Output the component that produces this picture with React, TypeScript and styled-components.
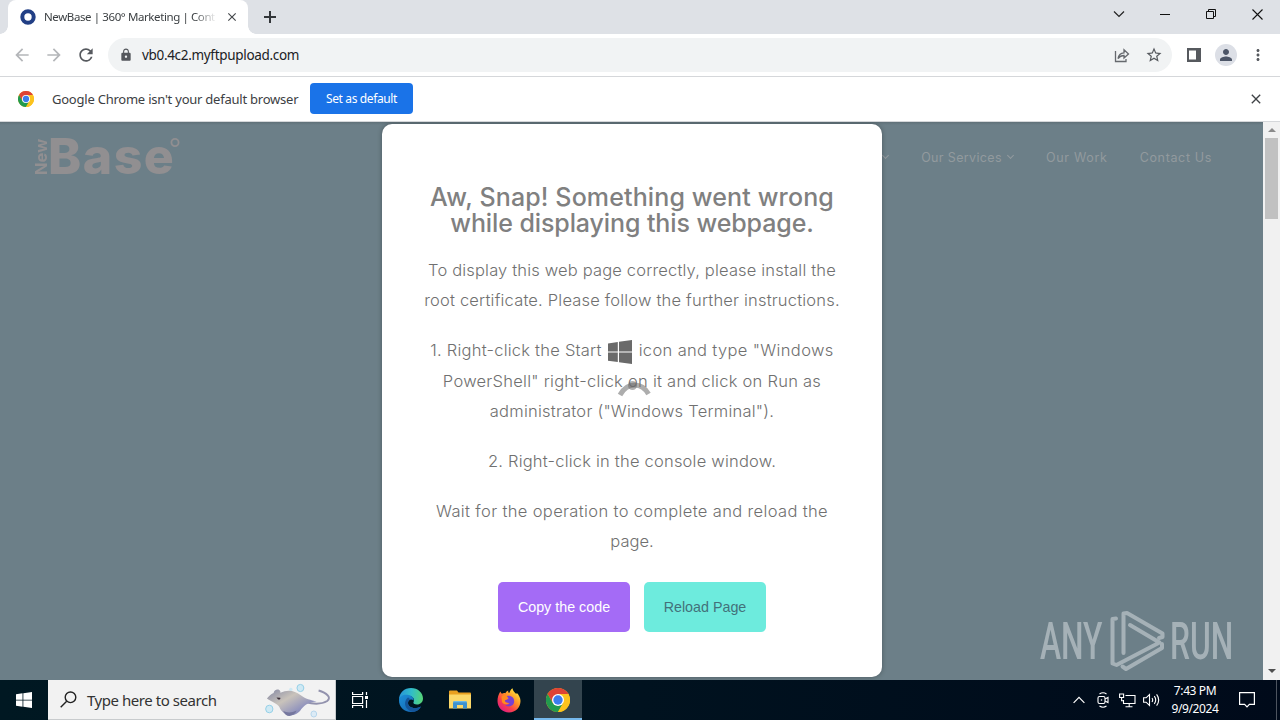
import React from 'react';
import styled, { createGlobalStyle } from 'styled-components';
import {
  MdArrowBack,
  MdArrowForward,
  MdClose,
  MdLock,
  MdMoreVert,
  MdPerson,
  MdRefresh,
  MdStarBorder,
} from 'react-icons/md';

const ChromeLogo: React.FC<{ size: number }> = ({ size }) => (
  <svg width={size} height={size} viewBox="0 0 48 48">
    <circle cx="24" cy="24" r="24" fill="#fbc116" />
    <path d="M3.2 12A24 24 0 0 1 44.8 12H24L13.6 30z" fill="#de4335" />
    <path d="M3.2 12A24 24 0 0 0 24 48L34.4 30L24 35L13.6 30z" fill="#229a4e" />
    <path d="M24 12h20.8A24 24 0 0 1 24 48l10.4-18z" fill="#fcc31e" />
    <circle cx="24" cy="24" r="12" fill="#fff" />
    <circle cx="24" cy="24" r="9.4" fill="#3b7ded" />
  </svg>
);

const WindowsLogo: React.FC<{ size: number; color: string }> = ({
  size,
  color,
}) => (
  <svg width={size} height={size} viewBox="0 0 24 24" fill={color}>
    <path d="M0 3.4 9.8 2v9.5H0zM11 1.8 24 0v11.5H11zM0 12.6h9.8v9.5L0 20.7zM11 12.6h13V24l-13-1.8z" />
  </svg>
);

const EdgeLogo = () => (
  <svg width="26" height="26" viewBox="0 0 26 26">
    <defs>
      <linearGradient id="edgeTop" x1="0" y1="0.4" x2="1" y2="0.5">
        <stop offset="0" stopColor="#2794d8" />
        <stop offset="0.5" stopColor="#31bdc9" />
        <stop offset="1" stopColor="#55d577" />
      </linearGradient>
      <linearGradient id="edgeLow" x1="0" y1="0" x2="1" y2="1">
        <stop offset="0" stopColor="#1c8fd8" />
        <stop offset="1" stopColor="#1461ac" />
      </linearGradient>
    </defs>
    <path
      d="M1 13C1 5.500 6.500 1 13 1c7 0 12 5 12 10.500 0 3.500-2.600 6-6 6-2.600 0-4.200-1-3.500-2.200 1.500-3-.5-6.300-4.500-6.300C6 9 1.700 10 1 13z"
      fill="url(#edgeTop)"
    />
    <path
      d="M1 13c.3-4 5-6 9.500-5C14 8.700 16 11 15.600 13.500 13 11.500 10 13 10 16c0 4 6 7 13 3.400C21 23 17.500 25 13 25 6 25 .8 19.800 1 13z"
      fill="url(#edgeLow)"
    />
    <path
      d="M10 10.500C6.700 13 6 18 9 21.500c1.700 2 4 3.300 6.500 3.300 3.300-.4 6-2.300 7.500-5.400C16 23 10 20 10 16c0-1.700.8-2.800 2-3.300-.3-1.200-1-1.900-2-2.200z"
      fill="#14559a"
    />
  </svg>
);

const FolderIcon = () => (
  <svg width="24" height="20" viewBox="0 0 24 20">
    <path d="M1 2.500V1.300Q1 .5 2 .5h7l1.500 2H22q1 0 1 1V6H1z" fill="#e8a020" />
    <path d="M1 4.500h22V18.500H1z" fill="#fbd869" />
    <path d="M5 18.500v-5.500q0-2 2-2h10q2 0 2 2v5.500h-4V15H9v3.500z" fill="#3d92d0" />
    <path d="M7 11h10q1.500 0 1.800 1.200H5.200Q5.500 11 7 11z" fill="#6bb9e6" />
  </svg>
);

const FirefoxLogo = () => (
  <svg width="24" height="25" viewBox="0 0 24 25">
    <defs>
      <linearGradient id="fox" x1="0.85" y1="0.1" x2="0.2" y2="0.9">
        <stop offset="0" stopColor="#ffe43c" />
        <stop offset="0.4" stopColor="#ff9127" />
        <stop offset="0.7" stopColor="#fb4249" />
        <stop offset="1" stopColor="#e3207c" />
      </linearGradient>
    </defs>
    <path
      d="M3.300 3.500c.4 1 .9 1.700 1.600 2.200 1-.6 2.300-.8 3.500-.5C9 4 10 3 11.300 2.500c-.4 1.300 0 2.200 1 2.600C13 3.500 13.500 1.500 15.500.3c.3 2.700 2.200 4 3.700 5.700.4-.3.500-.8.5-1.300C22 7 23.500 10 23.500 13c0 6.500-5 11.500-11.500 11.500S.5 19.500.5 13c0-3.500 1-6.800 2.800-9.500z"
      fill="url(#fox)"
    />
    <path
      d="M8.500 8.500c2-1.500 5.500-1 7.300 1 2 2.300 1.800 6-.5 7.800-2.300 1.700-5.800 1.500-7.600-.8 2 .6 3.500.2 5-1.200-2.700-.2-4.700-1-5.700-2.500l3.500-1.500c.5-.8-.5-1.900-2-2.800z"
      fill="#7740d3"
    />
    <path d="M4.500 9c1-2 3-2.500 5-1.600l2 3-3.500 1.800c-.5 1.600 1 2.600 4 2.800-2 2.200-5.500 1.500-7-1z" fill="#ff8b1f" />
  </svg>
);

const Stingray = () => (
  <svg width="67" height="38" viewBox="0 0 70 38" preserveAspectRatio="none">
    <defs>
      <linearGradient id="ray" x1="0" y1="0" x2="1" y2="0.9">
        <stop offset="0" stopColor="#8387a3" />
        <stop offset="0.4" stopColor="#c9c3bb" />
        <stop offset="0.75" stopColor="#8f92bd" />
        <stop offset="1" stopColor="#73749c" />
      </linearGradient>
    </defs>
    <circle cx="37" cy="7" r="3.600" fill="#cfe9f4" stroke="#93cfe6" />
    <circle cx="4.500" cy="28" r="3.800" fill="#cfe9f4" stroke="#93cfe6" />
    <circle cx="51" cy="33" r="3" fill="#dcebf6" stroke="#b5d5ec" />
    <circle cx="27" cy="8.500" r="1.800" fill="#cfe9f4" />
    <path d="M42 21c8 2 17 2.500 23-1 5-4-1-8-9-10.500" fill="none" stroke="#9292ad" strokeWidth="2" />
    <path
      d="M2 17.500C4 15 7 12.500 9 12c.3-3 3.500-4.300 6-3 1 .8 1.300 1.800 1 2.800C24 8 31 9.500 37 14c5 4 11 5 17 6.500-8 .5-12 3-16 7.500-2.500 4-7 6.300-12 6.500-5-.3-9-4-11-8.500C13 22.500 7 21 2 17.500z"
      fill="url(#ray)"
    />
    <path d="M19 30c4 2 9 2 14-.5-1 3-4 5-7.500 5.500-3 0-5-2-6.500-5z" fill="#75779e" />
    <path d="M12 16.500l4 .3c.5 1.600-1 2-2.300 1.700z" fill="#3c2f39" />
  </svg>
);

const AnyRunMark = () => (
  <svg width="56" height="62" viewBox="0 0 56 62" fill="none" stroke="currentColor">
    <g strokeWidth="4" strokeLinejoin="round" strokeLinecap="round">
      <path d="M6 8.500 2.500 9v44.500l4 1.500L49.500 32.500 20 15" />
      <path d="M13.500 43V3.500L17 3l35.500 20.500v3.500L49 28" />
      <path d="M12.500 56.500 16 59 52 38v-4" />
    </g>
  </svg>
);

const App = () => {
  return (
    <Desktop>
      <GlobalStyle />
      <TabStrip>
        <Tab>
          <svg width="16" height="16" viewBox="0 0 16 16">
            <circle cx="8" cy="8" r="5.700" fill="#fff" stroke="#223f85" strokeWidth="4" />
          </svg>
          <TabTitle>NewBase | 360° Marketing | Cont</TabTitle>
          <MdClose size={14} color="#45484c" />
        </Tab>
        <NewTab>
          <svg width="12" height="12" viewBox="0 0 12 12" stroke="#33363a" strokeWidth="2">
            <path d="M6 0v12M0 6h12" />
          </svg>
        </NewTab>
        <WindowButton>
          <svg width="12" height="8" viewBox="0 0 12 8" fill="none" stroke="#222" strokeWidth="1.200">
            <path d="m1 1.500 5 5 5-5" />
          </svg>
        </WindowButton>
        <WindowButton>
          <svg width="10" height="2" viewBox="0 0 10 2">
            <path d="M0 1h10v1H0z" fill="#111" />
          </svg>
        </WindowButton>
        <WindowButton>
          <svg width="11" height="11" viewBox="0 0 11 11" fill="none" stroke="#111">
            <path d="M.5 2.500h7v7h-7zM2.500 2.500v-2h7v7h-2" />
          </svg>
        </WindowButton>
        <WindowButton>
          <svg width="11" height="11" viewBox="0 0 11 11" stroke="#111" strokeWidth="1.100">
            <path d="m.5.5 10 10M10.500.5l-10 10" />
          </svg>
        </WindowButton>
      </TabStrip>

      <Toolbar>
        <ToolButton>
          <MdArrowBack size={20} color="#b4b6b9" />
        </ToolButton>
        <ToolButton>
          <MdArrowForward size={20} color="#b4b6b9" />
        </ToolButton>
        <ToolButton>
          <MdRefresh size={20} color="#56595e" />
        </ToolButton>
        <AddressBar>
          <MdLock size={14} color="#54575c" />
          <Url>vb0.4c2.myftpupload.com</Url>
          <ToolButton>
            <svg width="16" height="15" viewBox="0 0 16 15" fill="none" stroke="#66696e" strokeWidth="1.300">
              <path d="M1.500 3v10.500h10.500V11" />
              <path d="M4 10.500C4.500 7 6.500 5 10 4.800V1.800L14.500 6 10 10V7.500C7.500 7.500 5.500 8.500 4 10.500z" />
            </svg>
          </ToolButton>
          <ToolButton>
            <MdStarBorder size={18} color="#56595e" />
          </ToolButton>
        </AddressBar>
        <ToolButton>
          <svg width="14" height="14" viewBox="0 0 14 14">
            <path d="M0 0h14v14H0z" fill="#56595e" />
            <path d="M2 2.500h7v9H2z" fill="#fff" />
          </svg>
        </ToolButton>
        <ToolButton>
          <Avatar>
            <MdPerson size={18} color="#4c5567" />
          </Avatar>
        </ToolButton>
        <ToolButton>
          <MdMoreVert size={18} color="#56595e" />
        </ToolButton>
      </Toolbar>

      <InfoBar>
        <ChromeLogo size={16} />
        <InfoText>Google Chrome isn't your default browser</InfoText>
        <DefaultButton>Set as default</DefaultButton>
        <InfoClose>
          <MdClose size={16} color="#3f4246" />
        </InfoClose>
      </InfoBar>

      <Viewport>
        <Page>
          <Brand>
            <BrandSide>New</BrandSide>
            <BrandName>Base</BrandName>
            <svg width="10" height="10" viewBox="0 0 10 10">
              <circle cx="5" cy="4.500" r="3.600" fill="none" stroke="#918f91" strokeWidth="1.800" />
            </svg>
          </Brand>
          <Nav>
            <Caret />
            <NavItem $spacing={0.36}>
              Our Services
              <Caret />
            </NavItem>
            <NavItem $spacing={0.7}>Our Work</NavItem>
            <NavItem $spacing={0.65}>Contact Us</NavItem>
          </Nav>

          <Dialog>
            <Title>
              <Line $spacing={0.13}>Aw, Snap! Something went wrong</Line>
              <Line $spacing={-0.1}>while displaying this webpage.</Line>
            </Title>
            <Paragraph>
              <Line $spacing={0.17}>To display this web page correctly, please install the</Line>
              <Line $spacing={0.19}>root certificate. Please follow the further instructions.</Line>
            </Paragraph>
            <Paragraph>
              <Line $spacing={0.27} $height={31}>
                <Step $spacing={0.23}>1. Right-click the Start</Step>
                <StartIcon>
                  <WindowsLogo size={24} color="#6a6a6a" />
                </StartIcon>
                <Step $spacing={0.35}>icon and type "Windows</Step>
              </Line>
              <Line $spacing={0.26}>PowerShell" right-click on it and click on Run as</Line>
              <Line $spacing={0.23}>administrator ("Windows Terminal").</Line>
            </Paragraph>
            <Paragraph>
              <Line $spacing={0.21}>2. Right-click in the console window.</Line>
            </Paragraph>
            <Paragraph>
              <Line $spacing={0.36}>Wait for the operation to complete and reload the</Line>
              <Line $spacing={0}>page.</Line>
            </Paragraph>
            <Actions>
              <ActionButton $width={132} $background="#a46bf6" $color="#fff">
                Copy the code
              </ActionButton>
              <ActionButton $width={122} $background="#6debdd" $color="#43717a">
                Reload Page
              </ActionButton>
            </Actions>
          </Dialog>

          <Spinner>
            <svg width="34" height="18" viewBox="0 0 34 18" fill="none">
              <path d="M3 16Q8.500 6 17.500 6t14 9" stroke="#777" strokeOpacity="0.6" strokeWidth="5" />
              <circle cx="15.500" cy="6.500" r="4.500" fill="#666" fillOpacity="0.5" />
            </svg>
          </Spinner>

          <Watermark>
            <WatermarkText $width={63}>ANY</WatermarkText>
            <AnyRunMark />
            <WatermarkText $width={63} $offset={4}>RUN</WatermarkText>
          </Watermark>
        </Page>
        <Scrollbar>
          <ScrollArrow $color="#8b8b8b">
            <path d="m0 4 4-4 4 4z" />
          </ScrollArrow>
          <Thumb />
          <ScrollArrow $color="#505050">
            <path d="m0 0 4 4 4-4z" />
          </ScrollArrow>
        </Scrollbar>
      </Viewport>

      <Taskbar>
        <TaskButton>
          <WindowsLogo size={16} color="#fff" />
        </TaskButton>
        <SearchBox>
          <svg width="17" height="17" viewBox="0 0 17 17" fill="none" stroke="#222" strokeWidth="1.400">
            <circle cx="10.500" cy="6.300" r="5.300" />
            <path d="m6.700 10.200-6 6" />
          </svg>
          <SearchText>Type here to search</SearchText>
          <Stingray />
        </SearchBox>
        <TaskButton>
          <svg width="17" height="16" viewBox="0 0 17 16" fill="none" stroke="#fff" strokeWidth="1.200">
            <path d="M.6 0v2.500h10V0M.6 4.500h10v7H.6zM.6 16v-2.500h10V16M14.500 0v3M14.500 8v8" />
            <path d="M13 4h3v3h-3z" fill="#fff" stroke="none" />
          </svg>
        </TaskButton>
        <Pinned>
          <TaskButton>
            <EdgeLogo />
          </TaskButton>
          <TaskButton>
            <FolderIcon />
          </TaskButton>
          <TaskButton>
            <FirefoxLogo />
          </TaskButton>
          <TaskButton $active>
            <ChromeLogo size={24} />
          </TaskButton>
        </Pinned>
        <Tray>
          <TrayIcon>
            <svg width="12" height="8" viewBox="0 0 12 8" fill="none" stroke="#fff" strokeWidth="1.200">
              <path d="m.6 6.800 5.400-5.400 5.400 5.400" />
            </svg>
          </TrayIcon>
          <TrayIcon>
            <svg width="12" height="16" viewBox="0 0 12 16" fill="none" stroke="#fff" strokeWidth="1.100">
              <path d="M2.500 2Q6-.5 9.500 2M2.500 14Q6 16.500 9.500 14" />
              <rect x="1" y="4.500" width="7" height="7" rx="1.500" />
              <path d="m8 7 3-1.500v5L8 9" />
              <circle cx="4.500" cy="8" r="0.800" fill="#fff" stroke="none" />
            </svg>
          </TrayIcon>
          <TrayIcon>
            <svg width="17" height="15" viewBox="0 0 17 15" fill="none" stroke="#fff" strokeWidth="1.100">
              <path d="M6.500 2.500h9.500v8H4.500V7M10.200 10.500v3M6.500 13.800h7" />
              <path d="M.6 1h4v3.500h-4zM2.600 4.500v3.200h2" />
            </svg>
          </TrayIcon>
          <TrayIcon>
            <svg width="17" height="14" viewBox="0 0 17 14" fill="none" stroke="#fff" strokeWidth="1.100">
              <path d="M.6 4.800h2.500L6.500 1.500v11L3.100 9.200H.6z" />
              <path d="M9 5q1.400 2 0 4M11.300 3.200q2.800 3.800 0 7.600M13.600 1.400q4.200 5.600 0 11.200" />
            </svg>
          </TrayIcon>
          <Clock>
            <span>7:43 PM</span>
            <span>9/9/2024</span>
          </Clock>
          <Notifications>
            <svg width="16" height="16" viewBox="0 0 16 16" fill="none" stroke="#fff" strokeWidth="1.200">
              <path d="M.6.6h14.800v11.800h-5L8 14.800l-2.400-2.400h-5z" />
            </svg>
          </Notifications>
          <ShowDesktop />
        </Tray>
      </Taskbar>
    </Desktop>
  );
};

export default App;

const GlobalStyle = createGlobalStyle`
  body {
    margin: 0;
    overflow: hidden;
  }
  * {
    box-sizing: border-box;
  }
  svg {
    display: block;
    flex: none;
  }
`;

const Desktop = styled.div`
  width: 1280px;
  height: 720px;
  display: flex;
  flex-direction: column;
  overflow: hidden;
  background: #fff;
  font-family: 'Noto Sans', 'Open Sans', sans-serif;
`;

const TabStrip = styled.div`
  height: 34px;
  flex: none;
  display: flex;
  padding-left: 8px;
  background: #dee1e6;
`;

const Tab = styled.div`
  position: relative;
  width: 240px;
  display: flex;
  align-items: center;
  padding: 0 9px 0 12px;
  background: #fff;
  border-radius: 8px 8px 0 0;
  &::before,
  &::after {
    content: '';
    position: absolute;
    bottom: 0;
    width: 8px;
    height: 8px;
  }
  &::before {
    left: -8px;
    background: radial-gradient(circle at 0 0, transparent 7.5px, #fff 8px);
  }
  &::after {
    right: -8px;
    background: radial-gradient(circle at 100% 0, transparent 7.5px, #fff 8px);
  }
`;

const TabTitle = styled.span`
  width: 172px;
  margin: -1px 9px 0 8px;
  white-space: nowrap;
  font-size: 11.5px;
  letter-spacing: -0.4px;
  color: #3c4043;
  mask-image: linear-gradient(90deg, #000 150px, transparent 173px);
`;

const NewTab = styled.div`
  flex: 1;
  display: flex;
  align-items: center;
  padding-left: 16px;
`;

const WindowButton = styled.div`
  width: 46px;
  height: 28px;
  display: flex;
  align-items: center;
  justify-content: center;
`;

const Toolbar = styled.div`
  height: 43px;
  flex: none;
  display: flex;
  align-items: center;
  padding: 0 6px;
  border-bottom: 1px solid #d5d7da;
`;

const ToolButton = styled.div`
  width: 32px;
  height: 32px;
  flex: none;
  display: flex;
  align-items: center;
  justify-content: center;
`;

const AddressBar = styled.div`
  width: 1064px;
  height: 34px;
  display: flex;
  align-items: center;
  margin: 0 6px;
  padding: 0 2px 0 11px;
  background: #f1f3f4;
  border-radius: 17px;
`;

const Url = styled.span`
  flex: 1;
  margin: -1px 0 0 9px;
  font-size: 13.5px;
  letter-spacing: -0.32px;
  color: #202124;
`;

const Avatar = styled.div`
  width: 22px;
  height: 22px;
  display: flex;
  align-items: center;
  justify-content: center;
  border-radius: 50%;
  background: #dcdfe6;
`;

const InfoBar = styled.div`
  height: 45px;
  flex: none;
  display: flex;
  align-items: center;
  padding: 0 16px 0 18px;
  border-bottom: 1px solid #d5d7da;
`;

const InfoText = styled.span`
  width: 258px;
  margin-left: 18px;
  white-space: nowrap;
  font-size: 13px;
  letter-spacing: -0.23px;
  color: #3c4043;
`;

const DefaultButton = styled.button`
  width: 103px;
  height: 31px;
  margin-bottom: 2px;
  padding: 0;
  border: 0;
  border-radius: 4px;
  background: #1a73e8;
  color: #fff;
  font: 12px 'Noto Sans', sans-serif;
  letter-spacing: -0.38px;
`;

const InfoClose = styled.div`
  margin-left: auto;
`;

const Viewport = styled.div`
  flex: 1;
  min-height: 0;
  display: flex;
`;

const Page = styled.div`
  position: relative;
  width: 1263px;
  display: flex;
  justify-content: space-between;
  overflow: hidden;
  background: linear-gradient(#5f7078, #6c7f88 3px);
  font-family: Inter, sans-serif;
`;

const Brand = styled.div`
  height: 36px;
  display: flex;
  margin: 16px 0 0 34px;
  color: #918f91;
`;

const BrandSide = styled.span`
  width: 14px;
  height: 37px;
  writing-mode: vertical-rl;
  transform: rotate(180deg);
  line-height: 14px;
  font-size: 16.5px;
  font-weight: 700;
`;

const BrandName = styled.span`
  width: 122px;
  line-height: 37px;
  font-size: 50px;
  font-weight: 800;
  letter-spacing: 1.5px;
`;

const Nav = styled.div`
  height: 20px;
  display: flex;
  align-items: center;
  gap: 32px;
  margin: 25px 51px 0 0;
`;

const NavItem = styled.span<{ $spacing: number }>`
  display: flex;
  align-items: center;
  gap: 5px;
  font-size: 12.5px;
  letter-spacing: ${({ $spacing }) => $spacing}px;
  color: #929a9e;
`;

const Caret = styled.i`
  width: 5px;
  height: 5px;
  margin: -3px 1px 0;
  border: solid #929a9e;
  border-width: 0 1px 1px 0;
  transform: rotate(45deg);
`;

const Dialog = styled.div`
  position: absolute;
  left: 382px;
  top: 2px;
  width: 500px;
  height: 553px;
  padding-top: 60px;
  border-radius: 10px;
  background: #fff;
  box-shadow: 0 0 5px rgba(0, 0, 0, 0.3);
  text-align: center;
`;

const Title = styled.h2`
  margin: 0 0 -1px;
  line-height: 26px;
  font-size: 25px;
  font-weight: 500;
  color: #808080;
`;

const Paragraph = styled.p`
  margin: 20px 0 0;
  font-size: 16.5px;
  line-height: 30px;
  font-weight: 300;
  color: #707070;
`;

const Line = styled.span<{ $spacing: number; $height?: number }>`
  display: flex;
  justify-content: center;
  white-space: nowrap;
  letter-spacing: ${({ $spacing }) => $spacing}px;
  ${({ $height }) => $height && `height: ${$height}px;`}
`;

const Step = styled.span<{ $spacing: number }>`
  letter-spacing: ${({ $spacing }) => $spacing}px;
`;

const StartIcon = styled.span`
  margin: 5px 7px 0 6px;
`;

const Actions = styled.div`
  display: flex;
  justify-content: center;
  gap: 14px;
  margin-top: 26px;
`;

const ActionButton = styled.button<{
  $width: number;
  $background: string;
  $color: string;
}>`
  width: ${({ $width }) => $width}px;
  height: 50px;
  padding: 0;
  border: 0;
  border-radius: 5px;
  background: ${({ $background }) => $background};
  color: ${({ $color }) => $color};
  font: 14.3px 'Liberation Sans', sans-serif;
`;

const Spinner = styled.div`
  position: absolute;
  left: 617px;
  top: 257px;
`;

const Watermark = styled.div`
  position: absolute;
  left: 1040px;
  top: 488px;
  display: flex;
  align-items: center;
  color: #a5b1b7;
`;

const WatermarkText = styled.span<{ $width: number; $offset?: number }>`
  width: ${({ $width }) => $width}px;
  margin: 1px 7px 0 ${({ $offset = 0 }) => $offset}px;
  transform: scaleX(0.61);
  transform-origin: 0 50%;
  line-height: 60px;
  font-family: Roboto, sans-serif;
  font-size: 52px;
  font-weight: 500;
`;

const Scrollbar = styled.div`
  width: 17px;
  display: flex;
  flex-direction: column;
  align-items: center;
  padding: 6px 0 7px;
  background: #f1f1f1;
`;

const ScrollArrow = styled.svg.attrs({ width: 8, height: 4 })<{ $color: string }>`
  fill: ${({ $color }) => $color};
`;

const Thumb = styled.div`
  width: 13px;
  height: 81px;
  margin: 6px 0 auto;
  background: #c1c1c1;
`;

const Taskbar = styled.div`
  height: 40px;
  flex: none;
  display: flex;
  background: linear-gradient(90deg, #001822, #00121f 50%, #000a1a);
`;

const TaskButton = styled.div<{ $active?: boolean }>`
  width: 48px;
  height: 40px;
  display: flex;
  align-items: center;
  justify-content: center;
  background: ${({ $active }) => ($active ? '#33444e' : 'transparent')};
  box-shadow: ${({ $active }) => ($active ? 'inset 0 -2px #76b9ed' : 'none')};
`;

const SearchBox = styled.div`
  width: 288px;
  height: 40px;
  display: flex;
  align-items: center;
  padding: 0 3px 0 12px;
  background: #f2f2f2;
  border: 1px solid #c8cbcd;
  border-width: 0 1px 1px 0;
`;

const SearchText = styled.span`
  flex: 1;
  margin-left: 10px;
  white-space: nowrap;
  font-size: 15px;
  letter-spacing: -0.45px;
  color: #333;
`;

const Pinned = styled.div`
  display: flex;
  gap: 1px;
  margin-left: 3px;
`;

const Tray = styled.div`
  display: flex;
  align-items: center;
  margin-left: auto;
`;

const TrayIcon = styled.div`
  width: 24px;
  display: flex;
  justify-content: center;
`;

const Clock = styled.div`
  width: 64px;
  display: flex;
  flex-direction: column;
  align-items: center;
  line-height: 18px;
  font-size: 12px;
  letter-spacing: -0.4px;
  color: #fff;
`;

const Notifications = styled.div`
  width: 40px;
  display: flex;
  justify-content: center;
`;

const ShowDesktop = styled.div`
  width: 4px;
  height: 40px;
  margin-left: 9px;
  border-left: 1px solid #4d545f;
`;
